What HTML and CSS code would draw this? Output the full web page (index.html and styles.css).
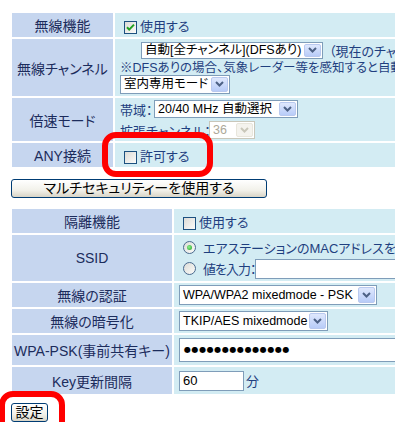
FILE: index.html
```html
<!DOCTYPE html>
<html lang="ja">
  <head>
    <meta charset="UTF-8" />
    <title>無線設定</title>
    <link rel="stylesheet" href="styles.css">
  </head>
  <body>
    <div class="page">
      <table class="conf conf-top">
        <tr class="r24">
          <th>無線機能</th>
          <td>
            <span class="chk"><svg viewBox="0 0 11 11" width="11" height="11"><path d="M2 5.3l2.2 2.3L9 2.6" fill="none" stroke="#21a121" stroke-width="2"/></svg></span>使用する
          </td>
        </tr>
        <tr class="r57">
          <th>無線チャンネル</th>
          <td>
            <div class="line l17">
              <span class="sel w182 ml21 h17"><span class="sel-val">自動[全チャンネル](DFSあり)</span><span class="sel-btn"><svg viewBox="0 0 9 6" width="9" height="6"><path d="M1 1l3.5 3.5L8 1" fill="none" stroke="#4d6185" stroke-width="2"/></svg></span></span>
              <span class="note">（現在のチャンネル：36）</span>
            </div>
            <div class="line l16 small">※DFSありの場合、気象レーダー等を感知すると自動的にチャンネルを変更します。</div>
            <div class="line l19">
              <span class="sel w110"><span class="sel-val">室内専用モード</span><span class="sel-btn"><svg viewBox="0 0 9 6" width="9" height="6"><path d="M1 1l3.5 3.5L8 1" fill="none" stroke="#4d6185" stroke-width="2"/></svg></span></span>
            </div>
          </td>
        </tr>
        <tr class="r43">
          <th>倍速モード</th>
          <td>
            <div class="line l19">
              <span class="lbl w34">帯域：</span>
              <span class="sel w144 h18"><span class="sel-val">20/40 MHz 自動選択</span><span class="sel-btn"><svg viewBox="0 0 9 6" width="9" height="6"><path d="M1 1l3.5 3.5L8 1" fill="none" stroke="#4d6185" stroke-width="2"/></svg></span></span>
            </div>
            <div class="line l19 gap2">
              <span class="lbl w89">拡張チャンネル：</span>
              <span class="sel sel-off w46 h18"><span class="sel-val">36</span><span class="sel-btn"><svg viewBox="0 0 9 6" width="9" height="6"><path d="M1 1l3.5 3.5L8 1" fill="none" stroke="#c9c7ba" stroke-width="2"/></svg></span></span>
            </div>
          </td>
        </tr>
        <tr class="r24">
          <th>ANY接続</th>
          <td><span class="chk"></span>許可する</td>
        </tr>
      </table>

      <button class="btn btn-multi" type="button">マルチセキュリティーを使用する</button>

      <table class="conf conf-sec">
        <tr class="r24">
          <th>隔離機能</th>
          <td><span class="chk"></span>使用する</td>
        </tr>
        <tr class="r46">
          <th>SSID</th>
          <td>
            <div class="line l19">
              <span class="radio on"></span>エアステーションのMACアドレスを設定する
            </div>
            <div class="line l20 gap2">
              <span class="radio"></span><span class="lbl w52">値を入力：</span>
              <span class="field w300"></span>
            </div>
          </td>
        </tr>
        <tr class="r24">
          <th>無線の認証</th>
          <td>
            <span class="sel w198 h20"><span class="sel-val">WPA/WPA2 mixedmode - PSK</span><span class="sel-btn"><svg viewBox="0 0 9 6" width="9" height="6"><path d="M1 1l3.5 3.5L8 1" fill="none" stroke="#4d6185" stroke-width="2"/></svg></span></span>
          </td>
        </tr>
        <tr class="r24">
          <th>無線の暗号化</th>
          <td>
            <span class="sel w149 h20"><span class="sel-val">TKIP/AES mixedmode</span><span class="sel-btn"><svg viewBox="0 0 9 6" width="9" height="6"><path d="M1 1l3.5 3.5L8 1" fill="none" stroke="#4d6185" stroke-width="2"/></svg></span></span>
          </td>
        </tr>
        <tr class="r30">
          <th>WPA-PSK(事前共有キー)</th>
          <td><span class="field pass w400">●●●●●●●●●●●●●●</span></td>
        </tr>
        <tr class="r27">
          <th>Key更新間隔</th>
          <td><span class="field w65">60</span><span class="unit">分</span></td>
        </tr>
      </table>

      <button class="btn btn-save" type="button">設定</button>
    </div>

    <div class="mark mark-any"></div>
    <div class="mark mark-save"></div>
  </body>
</html>
```

FILE: styles.css
```css
html {
  overflow: hidden;
}

body {
  margin: 0;
  background: #fff;
  color: #1f3f7f;
  font-family: "Liberation Sans", "Noto Sans CJK JP", sans-serif;
  font-feature-settings: "palt";
  font-size: 13px;
  position: relative;
}

.page {
  padding: 11px 0 0 10px;
  width: 720px;
}

.conf {
  border-collapse: separate;
  border-spacing: 2px;
}

.conf th {
  background: #c6d6ef;
  color: #1c2c5c;
  font-weight: normal;
  font-size: 14px;
  text-align: center;
  padding: 0;
  white-space: nowrap;
}

.conf td {
  background: #d3ecf3;
  padding: 0 5px;
  white-space: nowrap;
  text-align: left;
}

.conf-top {
  width: 620px;
}
.conf-top th {
  width: 101px;
}

.conf-sec {
  width: 640px;
  margin-top: 9px;
}
.conf-sec th {
  width: 160px;
}

.r24 { height: 24px; }
.r27 { height: 27px; }
.r30 { height: 30px; }
.r43 { height: 43px; }
.r46 { height: 46px; }
.r57 { height: 57px; }

.line {
  display: flex;
  align-items: center;
}
.l16 { height: 16px; }
.l17 { height: 17px; }
.l19 { height: 19px; }
.l20 { height: 20px; }
.gap2 { margin-top: 2px; }

.small {
  font-size: 12.5px;
}

.note {
  margin-left: 6px;
}

.lbl {
  display: inline-block;
  flex: none;
}
.w34 { width: 34px; }
.w52 { width: 52px; letter-spacing: -1px; }
.w89 { width: 89px; }

/* checkbox / radio */
.chk {
  display: inline-flex;
  align-items: center;
  justify-content: center;
  box-sizing: border-box;
  width: 13px;
  height: 13px;
  margin: 0 3px 0 4px;
  border: 1px solid #1c5180;
  background: linear-gradient(135deg, #dcdcd7, #fbfbf9);
  vertical-align: middle;
}

.radio {
  display: inline-block;
  position: relative;
  box-sizing: border-box;
  width: 13px;
  height: 13px;
  margin: 0 7px 0 4px;
  border: 1px solid #4a6a8e;
  border-radius: 50%;
  background: linear-gradient(135deg, #dcdcd7, #fbfbf9);
  flex: none;
}
.radio.on::after {
  content: "";
  position: absolute;
  left: 3px;
  top: 3px;
  width: 5px;
  height: 5px;
  border-radius: 50%;
  background: radial-gradient(circle at 40% 40%, #8ef08e, #21a121);
}

/* selects */
.sel {
  display: inline-flex;
  align-items: stretch;
  box-sizing: border-box;
  height: 19px;
  border: 1px solid #7f9db9;
  background: #fff;
  color: #000;
  font-size: 12.5px;
  vertical-align: middle;
  flex: none;
}
.sel-val {
  flex: 1;
  padding: 0 3px;
  line-height: 17px;
  overflow: hidden;
  white-space: nowrap;
}
.sel-btn {
  display: flex;
  align-items: center;
  justify-content: center;
  width: 17px;
  margin: 1px;
  border: 1px solid #b9c9ef;
  border-radius: 2px;
  background: linear-gradient(#dfe8fd, #b8ccf8);
  box-sizing: border-box;
}
.sel-off {
  border-color: #c9c7ba;
  color: #aca899;
}
.sel-off .sel-btn {
  border-color: #e8e6dc;
  background: #f4f3ee;
}

.h17 { height: 17px; }
.h17 .sel-val { line-height: 15px; }
.h18 { height: 18px; }
.h18 .sel-val { line-height: 16px; }
.h20 { height: 20px; }
.h20 .sel-val { line-height: 18px; }

.ml21 { margin-left: 21px; }
.w46 { width: 46px; }
.w65 { width: 65px; }
.w110 { width: 110px; }
.w144 { width: 144px; }
.w149 { width: 149px; }
.w182 { width: 182px; }
.w198 { width: 198px; }
.w300 { width: 300px; }
.w400 { width: 400px; }

/* text fields */
.field {
  display: inline-block;
  box-sizing: border-box;
  height: 20px;
  border: 1px solid #7f9db9;
  background: #fff;
  color: #000;
  padding: 0 3px;
  line-height: 18px;
  vertical-align: middle;
  flex: none;
}
.pass {
  height: 24px;
  line-height: 22px;
  font-family: "DejaVu Sans", sans-serif;
  font-size: 8px;
  letter-spacing: 0.6px;
  padding-left: 4px;
}
.unit {
  margin-left: 2px;
  vertical-align: middle;
}

/* buttons */
.btn {
  display: block;
  box-sizing: border-box;
  height: 19px;
  margin-left: 1px;
  padding: 0;
  border: 1px solid #003c74;
  border-radius: 3px;
  background: linear-gradient(#ffffff, #f2f1ea 60%, #d8d4c6);
  color: #000;
  font-family: "Liberation Sans", "Noto Sans CJK JP", sans-serif;
  font-feature-settings: "palt";
  font-size: 14px;
  line-height: 17px;
}
.btn-multi {
  width: 256px;
  margin-top: 10px;
}
.btn-save {
  width: 37px;
  margin-top: 7px;
}

/* red annotation marks */
.mark {
  position: absolute;
  box-sizing: border-box;
  border: 6px solid #ff0000;
  border-radius: 14px;
}
.mark-any {
  left: 102px;
  top: 132px;
  width: 111px;
  height: 45px;
}
.mark-save {
  left: -1px;
  top: 391px;
  width: 66px;
  height: 46px;
}
```
